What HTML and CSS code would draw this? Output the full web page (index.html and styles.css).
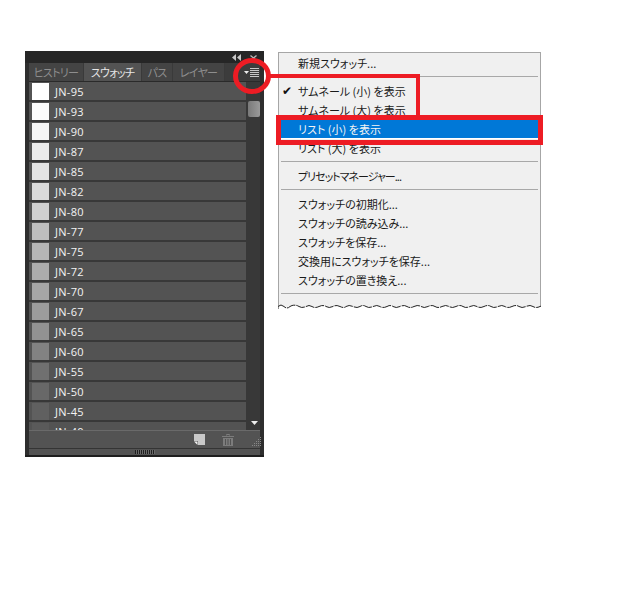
FILE: index.html
```html
<!DOCTYPE html>
<html lang="ja">
<head>
<meta charset="utf-8">
<title>スウォッチ</title>
<link rel="stylesheet" href="styles.css">
</head>
<body>
<main class="stage">
  <section class="panel">
    <div class="panel-top">
      <svg class="collapse" width="9" height="7" viewBox="0 0 9 7"><path d="M4 0v7L0 3.500zM9 0v7L5 3.500z" fill="#c8c8c8"/></svg>
      <svg class="close" width="7" height="6" viewBox="0 0 7 6"><path d="M.5.5l6 5M6.500.5l-6 5" stroke="#b8b8b8" stroke-width="1.300" fill="none"/></svg>
    </div>
    <div class="tabs">
      <span class="tab t1">ヒストリー</span>
      <span class="tab active t2">スウォッチ</span>
      <span class="tab t3">パス</span>
      <span class="tab t4">レイヤー</span>
      <span class="tab-fill">
        <svg width="15" height="9" viewBox="0 0 15 9"><path d="M0 3h5L2.500 6z" fill="#eee"/><path d="M6 .5h9M6 2.500h9M6 4.500h9M6 6.500h9M6 8.500h9" stroke="#c8c8c8" stroke-width="1"/></svg>
      </span>
    </div>
    <div class="body">
      <div class="list">
        <div class="row"><i class="sw" style="background:#ffffff"></i><span>JN-95</span></div>
        <div class="row"><i class="sw" style="background:#fbfbfb"></i><span>JN-93</span></div>
        <div class="row"><i class="sw" style="background:#f5f5f5"></i><span>JN-90</span></div>
        <div class="row"><i class="sw" style="background:#ececec"></i><span>JN-87</span></div>
        <div class="row"><i class="sw" style="background:#e4e4e4"></i><span>JN-85</span></div>
        <div class="row"><i class="sw" style="background:#dadada"></i><span>JN-82</span></div>
        <div class="row"><i class="sw" style="background:#d0d0d0"></i><span>JN-80</span></div>
        <div class="row"><i class="sw" style="background:#bebebe"></i><span>JN-77</span></div>
        <div class="row"><i class="sw" style="background:#b6b6b6"></i><span>JN-75</span></div>
        <div class="row"><i class="sw" style="background:#acacac"></i><span>JN-72</span></div>
        <div class="row"><i class="sw" style="background:#a6a6a6"></i><span>JN-70</span></div>
        <div class="row"><i class="sw" style="background:#9c9c9c"></i><span>JN-67</span></div>
        <div class="row"><i class="sw" style="background:#929292"></i><span>JN-65</span></div>
        <div class="row"><i class="sw" style="background:#828282"></i><span>JN-60</span></div>
        <div class="row"><i class="sw" style="background:#707070"></i><span>JN-55</span></div>
        <div class="row"><i class="sw" style="background:#686868"></i><span>JN-50</span></div>
        <div class="row"><i class="sw" style="background:#606060"></i><span>JN-45</span></div>
        <div class="row"><i class="sw" style="background:#5a5a5a"></i><span>JN-40</span></div>
      </div>
      <div class="scroll">
        <div class="thumb"></div>
        <svg class="down" width="7" height="4" viewBox="0 0 7 4"><path d="M0 0h7L3.500 4z" fill="#eee"/></svg>
      </div>
    </div>
    <div class="foot">
      <svg class="new" width="11" height="11" viewBox="0 0 11 11"><path d="M0 0h11v11H4V7H0z" fill="#c9c9c9"/><path d="M0 7.500h3.500V11z" fill="#efefef"/></svg>
      <svg class="trash" width="12" height="12" viewBox="0 0 12 12"><path d="M4.500 1.500V.5h3v1M0 2.500h12" stroke="#7c7c7c" fill="none"/><path d="M1 4h10v8H1z" fill="#7c7c7c"/><path d="M3.500 5v6M6 5v6M8.500 5v6" stroke="#535353"/></svg>
      <svg class="grip" width="9" height="9" viewBox="0 0 9 9"><path d="M8 0h1v1H8zM6 2h1v1H6zM8 2h1v1H8zM4 4h1v1H4zM6 4h1v1H6zM8 4h1v1H8zM2 6h1v1H2zM4 6h1v1H4zM6 6h1v1H6zM8 6h1v1H8zM0 8h1v1H0zM2 8h1v1H2zM4 8h1v1H4zM6 8h1v1H6zM8 8h1v1H8z" fill="#888"/></svg>
    </div>
    <div class="strip"><span class="dots"></span></div>
  </section>

  <nav class="menu">
    <div class="item">新規スウォッチ...</div>
    <hr class="sep">
    <div class="item checked">サムネール (小) を表示</div>
    <div class="item">サムネール (大) を表示</div>
    <div class="item hot">リスト (小) を表示</div>
    <div class="item">リスト (大) を表示</div>
    <hr class="sep">
    <div class="item tight">プリセットマネージャー...</div>
    <hr class="sep">
    <div class="item">スウォッチの初期化...</div>
    <div class="item">スウォッチの読み込み...</div>
    <div class="item">スウォッチを保存...</div>
    <div class="item">交換用にスウォッチを保存...</div>
    <div class="item">スウォッチの置き換え...</div>
    <hr class="sep">
    <svg class="torn" width="263" height="5" viewBox="0 0 263 5"><path d="M0 2.500q3-3 6 0t6 0l2-1q4-1 7 1t7 0q3-2 6 0t7 0q4-2 7 0t7 0q3-2 7 0t6 0q3-2 7 0t7 0q3-2 6 0t7 0q4-2 7 0t7 0q3-2 6 0t7 0 7 0 7 0 7 0 7 0 7 0 7 0 7 0 7 0 7 0 7 0 7 0 7 0 7 0 7 0 7 0 7 0 7 0 7 0 7 0 7 0 7 0 7 0V7H0z" fill="#fff" stroke="#222" stroke-width="1" stroke-dasharray="9 1"/></svg>
  </nav>

  <div class="mark-circle"></div>
  <div class="mark-rect-a"></div>
  <div class="mark-rect-b"></div>
</main>
</body>
</html>
```

FILE: styles.css
```css
* { box-sizing: border-box; }
html, body { margin: 0; background: #fff; }
.stage {
  position: relative;
  width: 623px;
  height: 600px;
  display: flex;
  align-items: flex-start;
  padding: 51px 0 0 25px;
  font-family: "Noto Sans CJK JP", "Noto Sans", sans-serif;
}

/* Panel */
.panel {
  width: 239px;
  height: 406px;
  background: #2e2e2e;
  border-bottom: 2px solid #1e1e1e;
  display: flex;
  flex-direction: column;
  padding-left: 3px;
  padding-right: 4px;
  flex: none;
}
.panel-top {
  height: 12px;
  margin: 0 -4px 0 -3px;
  background: #262626;
  flex: none;
  display: flex;
  justify-content: flex-end;
  align-items: center;
  gap: 9px;
  padding: 1px 7px 0 0;
}
.tabs {
  height: 19px;
  display: flex;
  flex: none;
  gap: 1px;
  align-items: stretch;
  background: #3a3a3a;
  border-bottom: 1px solid #2a2a2a;
  margin-left: 1px;
}
.tab {
  background: #444;
  color: #8e8e8e;
  font-size: 11px;
  letter-spacing: -0.700px;
  line-height: 18px;
  text-align: center;
  font-feature-settings: "palt";
  flex: none;
  white-space: nowrap;
  overflow: hidden;
}
.tab.active { background: #535353; color: #e6e6e6; }
.t1 { width: 54px; }
.t2 { width: 57px; }
.t3 { width: 30px; }
.t4 { width: 51px; }
.tab-fill {
  flex: 1;
  display: flex;
  justify-content: flex-end;
  align-items: center;
  padding-right: 1px;
  background: #3c3c3c;
}
.body {
  flex: 1;
  min-height: 0;
  display: flex;
  overflow: hidden;
}
.list {
  width: 217px;
  margin-left: 1px;
  overflow: hidden;
}
.row {
  height: 20px;
  background: #535353;
  border-bottom: 2px solid #383838;
  display: flex;
  align-items: center;
  gap: 6px;
  padding: 1px 0 0 3px;
  color: #f4f4f4;
  font-family: "Open Sans", sans-serif;
  font-size: 11px;
  letter-spacing: 0.300px;
}
.sw { width: 17px; height: 17px; flex: none; }
.scroll {
  flex: 1;
  background: #383838;
  position: relative;
}
.thumb {
  position: absolute;
  left: 2px;
  top: 19px;
  width: 12px;
  height: 16px;
  border-radius: 2px;
  background: linear-gradient(90deg, #7a7a7a, #9a9a9a);
}
.down { position: absolute; left: 5px; top: 339px; }
.foot {
  height: 19px;
  flex: none;
  background: #535353;
  border-top: 1px solid #6a6a6a;
  border-bottom: 1px solid #343434;
  display: flex;
  align-items: center;
  margin-left: 1px;
  padding-left: 165px;
}
.new { flex: none; }
.trash { flex: none; margin-left: 17px; }
.grip { flex: none; margin-left: 18px; margin-top: 4px; }
.strip {
  height: 6px;
  flex: none;
  background: #535353;
  margin-left: 1px;
  display: flex;
  justify-content: center;
  align-items: center;
}
.dots {
  width: 20px;
  height: 4px;
  background: repeating-linear-gradient(90deg, #1f1f1f 0 1px, #6a6a6a 1px 2px);
}

/* Menu */
.menu {
  width: 263px;
  height: 257px;
  margin: 1px 0 0 14px;
  flex: none;
  background: #f0f0f0;
  border: 1px solid #a6a6a6;
  border-bottom: 0;
  padding: 1px 2px 0;
  display: flex;
  flex-direction: column;
  color: #1a1a1a;
  font-size: 11px;
  font-feature-settings: "palt";
  position: relative;
}
.item {
  height: 19px;
  line-height: 19px;
  padding-left: 17px;
  flex: none;
  white-space: nowrap;
  position: relative;
}
.tight { letter-spacing: -1px; }
.checked::before {
  content: "\2714";
  position: absolute;
  left: 1px;
  top: 0;
  font-family: "DejaVu Sans", sans-serif;
  font-size: 12px;
  color: #111;
}
.hot { background: #0078d7; color: #f4f4f4; border-bottom: 1px solid #fff; }
.sep {
  width: 100%;
  height: 1px;
  border: 0;
  background: #a8a8a8;
  margin: 3px 0 5px;
  flex: none;
}
.torn {
  position: absolute;
  left: -1px;
  bottom: 0;
}

/* Annotations drawn over the screenshot */
.mark-circle {
  position: absolute;
  left: 233px;
  top: 58px;
  width: 38px;
  height: 36px;
  border: 5px solid #ed1c24;
  border-radius: 50%;
}
.mark-rect-a {
  position: absolute;
  left: 269px;
  top: 74px;
  width: 151px;
  height: 46px;
  border-top: 4px solid #ed1c24;
  border-right: 4px solid #ed1c24;
}
.mark-rect-b {
  position: absolute;
  left: 276px;
  top: 115px;
  width: 267px;
  height: 30px;
  border: 5px solid #ed1c24;
}
```
